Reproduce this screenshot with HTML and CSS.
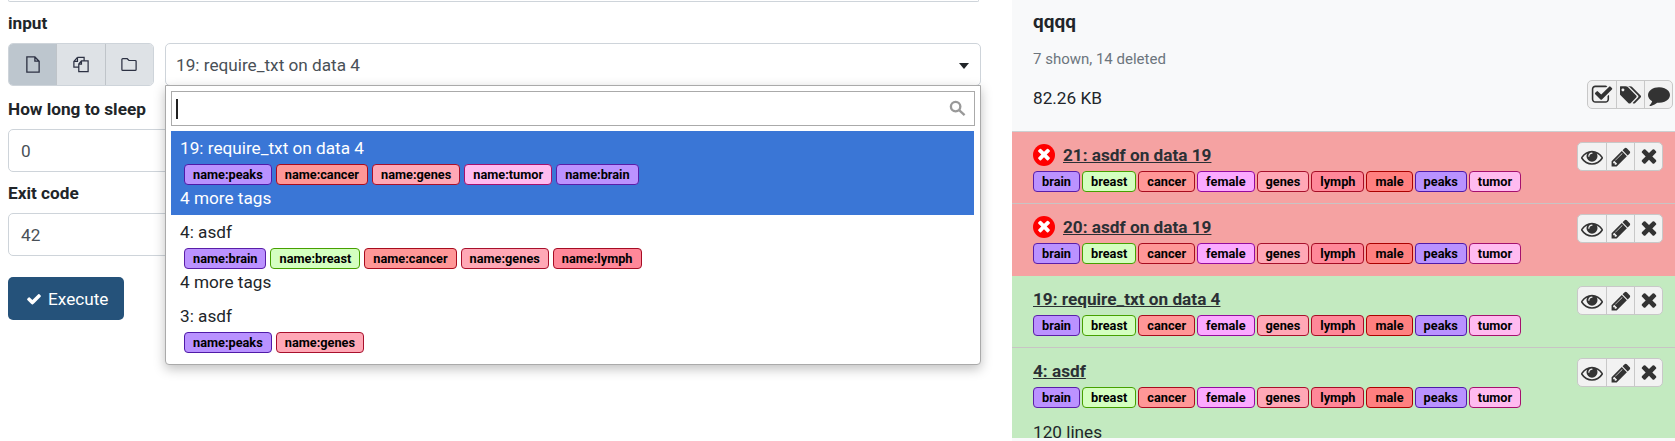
FILE: index.html
```html
<!DOCTYPE html>
<html lang="en">
<head>
<meta charset="utf-8">
<title>Tool form and history</title>
<link rel="stylesheet" href="styles.css">
</head>
<body>
<svg class="defs" xmlns="http://www.w3.org/2000/svg">
  <symbol id="i-times" viewBox="0 0 1408 1792"><path d="M1298 1214q0 40-28 68l-136 136q-28 28-68 28t-68-28l-294-294-294 294q-28 28-68 28t-68-28l-136-136q-28-28-28-68t28-68l294-294-294-294q-28-28-28-68t28-68l136-136q28-28 68-28t68 28l294 294 294-294q28-28 68-28t68 28l136 136q28 28 28 68t-28 68l-294 294 294 294q28 28 28 68z"/></symbol>
  <symbol id="i-check" viewBox="0 0 1792 1792"><path d="M1671 566q0 40-28 68l-724 724-136 136q-28 28-68 28t-68-28l-136-136-362-362q-28-28-28-68t28-68l136-136q28-28 68-28t68 28l294 295 656-657q28-28 68-28t68 28l136 136q28 28 28 68z"/></symbol>
  <symbol id="i-eye" viewBox="0 0 1792 1792"><path d="M1664 960q-152-236-381-353 61 104 61 225 0 185-131.500 316.500t-316.500 131.500-316.500-131.500-131.500-316.500q0-121 61-225-229 117-381 353 133 205 333.500 326.500t434.500 121.500 434.500-121.500 333.500-326.500zm-720-384q0-20-14-34t-34-14q-125 0-214.500 89.500t-89.500 214.500q0 20 14 34t34 14 34-14 14-34q0-86 61-147t147-61q20 0 34-14t14-34zm848 384q0 34-20 69-140 230-376.500 368.500t-499.500 138.500-499.500-139-376.500-368q-20-35-20-69t20-69q140-229 376.500-368t499.500-139 499.500 139 376.500 368q20 35 20 69z"/></symbol>
  <symbol id="i-pencil" viewBox="0 0 1792 1792"><path d="M491 1536l91-91-235-235-91 91v107h128v128h107zm523-928q0-22-22-22-10 0-17 7l-542 542q-7 7-7 17 0 22 22 22 10 0 17-7l542-542q7-7 7-17zm-54-192l416 416-832 832h-416v-416zm683 96q0 53-37 90l-166 166-416-416 166-165q36-38 90-38 53 0 91 38l235 234q37 39 37 91z"/></symbol>
  <symbol id="i-comment" viewBox="0 0 1792 1792"><path d="M1792 896q0 174-120 321.500t-326 233-450 85.500q-70 0-145-8-198 175-460 242-49 14-114 22-17 2-30.500-9t-17.500-29v-1q-3-4-.5-12t2-10 4.500-9.500l6-9 7-8.500 8-9q7-8 31-34.500t34.500-38 31-39.500 32.500-51 27-59 26-76q-157-89-247.500-220t-90.500-281q0-130 71-248.500t191-204.500 286-136.500 348-50.500q244 0 450 85.500t326 233 120 321.500z"/></symbol>
  <symbol id="i-tags" viewBox="0 0 1920 1792"><path d="M384 448q0-53-37.500-90.500t-90.500-37.500-90.500 37.500-37.500 90.500 37.500 90.500 90.500 37.500 90.500-37.500 37.500-90.500zm1067 576q0 53-37 90l-491 492q-39 37-91 37-53 0-90-37l-715-716q-38-37-64.500-101t-26.500-117v-416q0-52 38-90t90-38h416q53 0 117 26.500t102 64.500l715 714q37 39 37 91zm384 0q0 53-37 90l-491 492q-39 37-91 37-36 0-59-14t-53-45l470-470q37-37 37-90 0-52-37-91l-715-714q-38-38-102-64.500t-117-26.500h224q53 0 117 26.500t102 64.500l715 714q37 39 37 91z"/></symbol>
  <symbol id="i-checksq" viewBox="0 0 1792 1792"><path d="M1472 930v318q0 119-84.500 203.500t-203.500 84.500h-832q-119 0-203.500-84.500t-84.500-203.500v-832q0-119 84.500-203.500t203.500-84.500h832q63 0 117 25 15 7 18 23 3 17-9 29l-49 49q-10 10-23 10-3 0-9-2-23-6-45-6h-832q-66 0-113 47t-47 113v832q0 66 47 113t113 47h832q66 0 113-47t47-113v-254q0-13 9-22l64-64q10-10 23-10 6 0 12 3 20 8 20 29zm231-489l-814 814q-24 24-57 24t-57-24l-430-430q-24-24-24-57t24-57l110-110q24-24 57-24t57 24l263 263 647-647q24-24 57-24t57 24l110 110q24 24 24 57t-24 57z"/></symbol>
</svg>

<main class="page">
  <section class="form">
    <div class="stub"></div>

    <div class="field field-first">
      <label class="label">input</label>
      <div class="input-row">
        <div class="src-group">
          <button class="src-btn src-active">
            <svg class="src-icon" viewBox="0 0 16 18"><path d="M1.500 1h8.500l4.500 4.500v11.500h-13z M10 1v4.500h4.500"/></svg>
          </button>
          <button class="src-btn">
            <svg class="src-icon" viewBox="0 0 18 18"><path d="M5 1H12.500V5M5 1L1 5.500V12H6.500M1 5.500H5V1M9.500 5H17V17H6.500V8.500ZM9.500 5V8.500H6.500"/></svg>
          </button>
          <button class="src-btn">
            <svg class="src-icon" viewBox="0 0 18 16"><path d="M1 13.500a1 1 0 0 0 1 1h14a1 1 0 0 0 1-1v-9a1 1 0 0 0-1-1h-7l-2-2h-5a1 1 0 0 0-1 1z"/></svg>
          </button>
        </div>
        <div class="select">
          <span class="select-value">19: require_txt on data 4</span>
          <span class="caret"></span>
          <div class="dropdown">
            <div class="search">
              <span class="cursor"></span>
              <svg class="search-icon" viewBox="0 0 18 18"><circle cx="7" cy="7" r="5"/><path d="M11 11l5.500 5"/></svg>
            </div>
            <div class="options">
              <div class="option option-active">
                <div class="opt-title">19: require_txt on data 4</div>
                <div class="opt-tags">
                  <span class="tag t-peaks">name:peaks</span>
                  <span class="tag t-cancer">name:cancer</span>
                  <span class="tag t-genes">name:genes</span>
                  <span class="tag t-tumor">name:tumor</span>
                  <span class="tag t-brain">name:brain</span>
                </div>
                <div class="opt-more">4 more tags</div>
              </div>
              <div class="option">
                <div class="opt-title">4: asdf</div>
                <div class="opt-tags">
                  <span class="tag t-brain">name:brain</span>
                  <span class="tag t-breast">name:breast</span>
                  <span class="tag t-cancer">name:cancer</span>
                  <span class="tag t-genes">name:genes</span>
                  <span class="tag t-lymph">name:lymph</span>
                </div>
                <div class="opt-more">4 more tags</div>
              </div>
              <div class="option">
                <div class="opt-title">3: asdf</div>
                <div class="opt-tags">
                  <span class="tag t-peaks">name:peaks</span>
                  <span class="tag t-genes">name:genes</span>
                </div>
              </div>
            </div>
          </div>
        </div>
      </div>
    </div>

    <div class="field">
      <label class="label">How long to sleep</label>
      <div class="text-input">0</div>
    </div>

    <div class="field field-last">
      <label class="label">Exit code</label>
      <div class="text-input">42</div>
    </div>

    <button class="execute">
      <svg class="execute-icon"><use href="#i-check"/></svg>
      <span>Execute</span>
    </button>
  </section>

  <aside class="history">
    <header class="hist-head">
      <h1 class="hist-name">qqqq</h1>
      <div class="hist-count">7 shown, 14 deleted</div>
      <div class="hist-size-row">
        <span class="hist-size">82.26 KB</span>
        <div class="btn-group">
          <span class="icon-btn"><svg class="icon"><use href="#i-checksq"/></svg></span>
          <span class="icon-btn"><svg class="icon"><use href="#i-tags"/></svg></span>
          <span class="icon-btn"><svg class="icon"><use href="#i-comment"/></svg></span>
        </div>
      </div>
    </header>
    <div class="hist-list">
      <article class="ds ds-error">
        <div class="ds-main">
          <div class="ds-title"><span class="err"><svg class="err-icon"><use href="#i-times"/></svg></span><a class="ds-link">21: asdf on data 19</a></div>
          <div class="ds-tags"><span class="tag t-brain">brain</span><span class="tag t-breast">breast</span><span class="tag t-cancer">cancer</span><span class="tag t-female">female</span><span class="tag t-genes">genes</span><span class="tag t-lymph">lymph</span><span class="tag t-male">male</span><span class="tag t-peaks">peaks</span><span class="tag t-tumor">tumor</span></div>
        </div>
        <div class="btn-group">
          <span class="icon-btn"><svg class="icon"><use href="#i-eye"/></svg></span>
          <span class="icon-btn"><svg class="icon"><use href="#i-pencil"/></svg></span>
          <span class="icon-btn"><svg class="icon"><use href="#i-times"/></svg></span>
        </div>
      </article>
      <article class="ds ds-error ds-flat">
        <div class="ds-main">
          <div class="ds-title"><span class="err"><svg class="err-icon"><use href="#i-times"/></svg></span><a class="ds-link">20: asdf on data 19</a></div>
          <div class="ds-tags"><span class="tag t-brain">brain</span><span class="tag t-breast">breast</span><span class="tag t-cancer">cancer</span><span class="tag t-female">female</span><span class="tag t-genes">genes</span><span class="tag t-lymph">lymph</span><span class="tag t-male">male</span><span class="tag t-peaks">peaks</span><span class="tag t-tumor">tumor</span></div>
        </div>
        <div class="btn-group">
          <span class="icon-btn"><svg class="icon"><use href="#i-eye"/></svg></span>
          <span class="icon-btn"><svg class="icon"><use href="#i-pencil"/></svg></span>
          <span class="icon-btn"><svg class="icon"><use href="#i-times"/></svg></span>
        </div>
      </article>
      <article class="ds ds-ok">
        <div class="ds-main">
          <div class="ds-title"><a class="ds-link">19: require_txt on data 4</a></div>
          <div class="ds-tags"><span class="tag t-brain">brain</span><span class="tag t-breast">breast</span><span class="tag t-cancer">cancer</span><span class="tag t-female">female</span><span class="tag t-genes">genes</span><span class="tag t-lymph">lymph</span><span class="tag t-male">male</span><span class="tag t-peaks">peaks</span><span class="tag t-tumor">tumor</span></div>
        </div>
        <div class="btn-group">
          <span class="icon-btn"><svg class="icon"><use href="#i-eye"/></svg></span>
          <span class="icon-btn"><svg class="icon"><use href="#i-pencil"/></svg></span>
          <span class="icon-btn"><svg class="icon"><use href="#i-times"/></svg></span>
        </div>
      </article>
      <article class="ds ds-ok ds-last">
        <div class="ds-main">
          <div class="ds-title"><a class="ds-link">4: asdf</a></div>
          <div class="ds-tags"><span class="tag t-brain">brain</span><span class="tag t-breast">breast</span><span class="tag t-cancer">cancer</span><span class="tag t-female">female</span><span class="tag t-genes">genes</span><span class="tag t-lymph">lymph</span><span class="tag t-male">male</span><span class="tag t-peaks">peaks</span><span class="tag t-tumor">tumor</span></div>
          <div class="ds-lines">120 lines</div>
        </div>
        <div class="btn-group">
          <span class="icon-btn"><svg class="icon"><use href="#i-eye"/></svg></span>
          <span class="icon-btn"><svg class="icon"><use href="#i-pencil"/></svg></span>
          <span class="icon-btn"><svg class="icon"><use href="#i-times"/></svg></span>
        </div>
      </article>
    </div>
  </aside>
</main>
</body>
</html>
```
FILE: styles.css
```css
* { box-sizing: border-box; }
html, body { margin: 0; height: 441px; overflow: hidden; background: #fff; }
body { font-family: Roboto, "Liberation Sans", sans-serif; font-size: 17.200px; line-height: 24px; color: #212529; }
.defs { display: none; }
.page { display: flex; height: 441px; }

/* form column */
.form { width: 1012px; flex: none; padding: 0 31px 0 8px; }
.stub { height: 2px; margin-bottom: 9px; border: 1px solid #ced4da; border-top: 0; border-radius: 0 0 4px 4px; margin-right: 2px; }
.field { margin-bottom: 9px; }
.field-first { margin-bottom: 11px; }
.field-last { margin-bottom: 21px; }
.label { display: block; font-weight: 700; margin-bottom: 8px; }
.input-row { display: flex; gap: 11px; }
.src-group { display: flex; width: 146px; height: 43px; border-radius: 5px; overflow: hidden; flex: none; border: 1px solid #ced4da; }
.src-btn { flex: 1; border: 0; border-left: 1px solid #bfc4c9; background: #dee2e6; padding: 0; display: flex; align-items: center; justify-content: center; }
.src-btn:first-child { border-left: 0; }
.src-active { background: #bdc6ce; }
.src-icon { width: 16px; height: 17px; fill: none; stroke: #2c3143; stroke-width: 1.400; }
.select { position: relative; flex: 1; height: 43px; border: 1px solid #ced4da; border-radius: 5px; background: #fff; padding: 9px 10px 8px; display: flex; align-items: center; justify-content: space-between; z-index: 2; }
.select-value { color: #495057; }
.caret { width: 0; height: 0; border: 5px solid transparent; border-top: 6px solid #212529; border-bottom: 0; margin-right: 1px; margin-top: 2px; }
.dropdown { position: absolute; left: -1px; top: 41px; width: 816px; height: 280px; background: #fff; border: 1px solid #aaa; border-radius: 0 0 4px 4px; box-shadow: 0 4px 12px rgba(0,0,0,.25); padding: 5px; }
.search { height: 35px; border: 1px solid #aaa; margin-bottom: 5px; display: flex; align-items: center; justify-content: space-between; padding: 0 8px 0 4px; }
.cursor { width: 2px; height: 20px; background: #222; }
.search-icon { width: 17px; height: 17px; fill: none; stroke: #999; stroke-width: 2.500; }
.options { margin-right: 1px; }
.option { padding: 5px 9px; color: #212529; }
.option-active { background: #3a76d6; color: #fff; }
.opt-title, .opt-more { height: 24px; }
.opt-tags { display: flex; gap: 4px; padding: 4px 0 1px 4px; }

/* tags */
.tag { display: block; height: 21px; padding: 0 8px; border: 1px solid #000; border-radius: 4px; font-size: 12.750px; line-height: 19px; font-weight: 700; color: #000; white-space: nowrap; }
.t-brain { background: #bb92ff; border-color: #5a1ea8; }
.t-peaks { background: #b992ff; border-color: #4f1aa8; }
.t-breast { background: #d4ffc0; border-color: #46a000; }
.t-cancer { background: #ff9797; border-color: #a80b1e; }
.t-female { background: #fbaaff; border-color: #950a9e; }
.t-genes { background: #ffa8b6; border-color: #a8102c; }
.t-lymph { background: #ff8899; border-color: #a60c24; }
.t-male { background: #ff8080; border-color: #ac0000; }
.t-tumor { background: #ffbbf0; border-color: #a5106e; }

.text-input { height: 43px; border: 1px solid #ced4da; border-radius: 5px; padding: 9px 12px; color: #495057; margin-right: 0; }
.execute { display: flex; align-items: center; gap: 6px; width: 116px; height: 43px; border: 0; border-radius: 5px; background: #25527a; color: #fff; font: inherit; padding: 0 0 0 18px; }
.execute-icon { width: 16px; height: 16px; fill: #fff; }

/* history column */
.history { flex: 1; min-width: 0; background: #f8f9fa; display: flex; flex-direction: column; }
.hist-head { height: 132px; flex: none; padding: 10px 2px 0 21px; border-bottom: 1px solid #ccd0d2; }
.hist-name { margin: 0; font-size: 19px; line-height: 24px; font-weight: 700; }
.hist-count { margin-top: 15px; font-size: 15px; line-height: 21px; color: #6c757d; }
.hist-size-row { display: flex; justify-content: space-between; align-items: flex-start; }
.hist-size { margin-top: 16px; }
.hist-size-row .btn-group { margin-top: 10px; margin-right: 0; }
.hist-list { height: 306px; overflow: hidden; }
.ds { height: 72px; padding: 11px 12px 0 21px; display: flex; justify-content: space-between; align-items: flex-start; border-bottom: 1px solid #c8c4c4; }
.ds-error { background: #f5a2a2; }
.ds-flat { border-bottom: 0; }
.ds-ok { background: #c3eac0; }
.ds-last { height: 91px; border-bottom: 0; }
.ds-title { display: flex; align-items: center; height: 24px; font-weight: 700; }
.ds-link { text-decoration: underline; color: #2b3035; }
.err { width: 22px; height: 22px; border-radius: 50%; background: #f00; margin-right: 8px; display: flex; align-items: center; justify-content: center; }
.err-icon { width: 14px; height: 18px; fill: #fff; }
.ds-tags { display: flex; gap: 2px; margin-top: 4px; }
.ds-lines { margin-top: 12px; }

.btn-group { display: flex; flex: none; height: 29px; background: #f2f2f2; border: 1px solid #c8c8c8; border-radius: 5px; margin-top: -1px; }
.icon-btn { width: 28px; display: flex; align-items: center; justify-content: center; border-left: 1px solid #c8c8c8; }
.icon-btn:first-child { border-left: 0; }
.icon { width: 22px; height: 22px; fill: #333; }
```
